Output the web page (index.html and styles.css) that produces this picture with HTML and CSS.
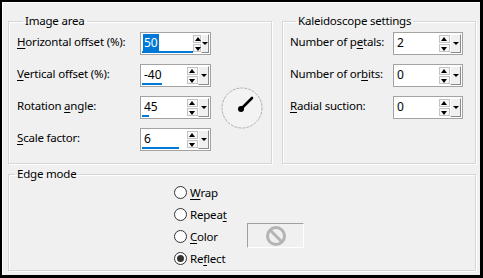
FILE: index.html
```html
<!DOCTYPE html>
<html>
<head>
    <meta charset="UTF-8">
    <title>Kaleidoscope</title>
    <link rel="stylesheet" href="styles.css">
</head>
<body>
    <div class="dialog">
        <div class="top_row">
            <fieldset class="group image_area">
                <legend>Image area</legend>
                <div class="grid_left">
                    <label class="lbl"><u>H</u>orizontal offset (%):</label>
                    <div class="spin">
                        <div class="field"><span class="val"><span class="sel">50</span></span><i class="bar" style="width:51px"></i></div>
                        <div class="arrows"><b class="up"></b><b class="down"></b></div>
                        <div class="drop"></div>
                    </div>

                    <label class="lbl"><u>V</u>ertical offset (%):</label>
                    <div class="spin">
                        <div class="field"><span class="val">-40</span><i class="bar" style="width:20px"></i></div>
                        <div class="arrows"><b class="up"></b><b class="down"></b></div>
                        <div class="drop"></div>
                    </div>

                    <label class="lbl">Rotation <u>a</u>ngle:</label>
                    <div class="spin">
                        <div class="field"><span class="val">45</span><i class="bar" style="width:7px"></i></div>
                        <div class="arrows"><b class="up"></b><b class="down"></b></div>
                        <div class="drop"></div>
                    </div>

                    <label class="lbl"><u>S</u>cale factor:</label>
                    <div class="spin">
                        <div class="field"><span class="val">6</span><i class="bar" style="width:37px"></i></div>
                        <div class="arrows"><b class="up"></b><b class="down"></b></div>
                        <div class="drop"></div>
                    </div>

                    <div class="dial">
                        <svg width="42" height="42" viewBox="0 0 42 42">
                            <circle cx="21" cy="21" r="20" fill="#f3f3f3" stroke="#b0b0b0" stroke-width="1" stroke-dasharray="3 1"/>
                            <line x1="20" y1="22" x2="31" y2="11" stroke="#000" stroke-width="2.6" stroke-linecap="round"/>
                            <circle cx="20" cy="22" r="3" fill="#000"/>
                        </svg>
                    </div>
                </div>
            </fieldset>

            <fieldset class="group kaleido">
                <legend>Kaleidoscope settings</legend>
                <div class="grid_right">
                    <label class="lbl">Number of p<u>e</u>tals:</label>
                    <div class="spin">
                        <div class="field"><span class="val">2</span></div>
                        <div class="arrows"><b class="up"></b><b class="down"></b></div>
                        <div class="drop"></div>
                    </div>

                    <label class="lbl">Number of or<u>b</u>its:</label>
                    <div class="spin">
                        <div class="field"><span class="val">0</span></div>
                        <div class="arrows"><b class="up"></b><b class="down"></b></div>
                        <div class="drop"></div>
                    </div>

                    <label class="lbl"><u>R</u>adial suction:</label>
                    <div class="spin">
                        <div class="field"><span class="val">0</span></div>
                        <div class="arrows"><b class="up"></b><b class="down"></b></div>
                        <div class="drop"></div>
                    </div>
                </div>
            </fieldset>
        </div>

        <fieldset class="group edge_mode">
            <legend>Edge mode</legend>
            <div class="edge_row">
                <div class="radios">
                    <div class="radio"><span class="dot"></span><span><u>W</u>rap</span></div>
                    <div class="radio"><span class="dot"></span><span>Repea<u>t</u></span></div>
                    <div class="radio"><span class="dot"></span><span><u>C</u>olor</span></div>
                    <div class="radio"><span class="dot checked"></span><span>Re<u>f</u>lect</span></div>
                </div>
                <div class="swatch">
                    <svg width="22" height="22" viewBox="0 0 22 22">
                        <circle cx="11" cy="11" r="8.5" fill="none" stroke="#b4b4b4" stroke-width="3"/>
                        <line x1="5" y1="5" x2="17" y2="17" stroke="#b4b4b4" stroke-width="3"/>
                    </svg>
                </div>
            </div>
        </fieldset>
    </div>
</body>
</html>
```

FILE: styles.css
```css
body {
    margin: 0;
    padding: 0;
    font-family: "Noto Sans", Arial, sans-serif;
    font-size: 11.5px;
    letter-spacing: -0.2px;
    color: #000;
    background-color: #f0f0f0;
}

u {
    text-decoration-thickness: 1px;
    text-underline-offset: 2px;
}

.dialog {
    width: 483px;
    height: 278px;
    box-sizing: border-box;
    border-style: solid;
    border-color: #000;
    border-width: 2px 3px 3px 2px;
    background-color: #f0f0f0;
    box-shadow: inset 1px 1px 0 #fff;
    padding: 12px 4px 0 6px;
}

.top_row {
    display: flex;
    gap: 10px;
}

.group {
    margin: 0;
    box-sizing: border-box;
    border: 1px solid #d6d6d6;
    box-shadow: inset 1px 1px 0 #fff, 1px 1px 0 #fff;
    min-width: 0;
}

.group legend {
    margin-left: 6px;
    padding: 0 2px;
    line-height: 14px;
}

.image_area {
    width: 264px;
    height: 150px;
    padding: 4px 0 0 8px;
}

.kaleido {
    width: 194px;
    height: 150px;
    padding: 4px 0 0 7px;
}

.grid_left {
    display: grid;
    grid-template-columns: 123px 71px 52px;
    grid-auto-rows: 23px;
    row-gap: 9px;
}

.grid_left .lbl {
    grid-column: 1;
}

.grid_left .spin {
    grid-column: 2;
}

.grid_right {
    display: grid;
    grid-template-columns: 103px 70px;
    grid-auto-rows: 23px;
    row-gap: 9px;
}

.lbl {
    align-self: start;
    line-height: 16px;
    padding-top: 2px;
    white-space: nowrap;
}

.dial {
    grid-column: 3;
    grid-row: 2 / span 3;
    align-self: center;
    height: 42px;
    margin-left: 10px;
}

.dial svg {
    display: block;
}

.spin {
    display: flex;
    box-sizing: border-box;
    height: 23px;
    border: 1px solid #a3a3a3;
    background-color: #fff;
    padding-right: 1px;
}

.field {
    flex: 1;
    display: flex;
    flex-direction: column;
    padding-left: 1px;
}

.val {
    line-height: 17px;
    padding-left: 2px;
    padding-top: 1px;
    font-size: 12px;
    letter-spacing: 0;
}

.sel {
    background-color: #0078d7;
    color: #fff;
    padding: 0 1px;
    margin-left: -1px;
}

.bar {
    display: block;
    height: 3px;
    margin-top: auto;
    margin-bottom: 1px;
    background-color: #0078d7;
}

.arrows {
    width: 11px;
    display: flex;
    flex-direction: column;
    gap: 1px;
    padding: 2px 0;
    box-sizing: border-box;
}

.arrows b {
    flex: 1;
    position: relative;
    box-sizing: border-box;
    border: 1px solid #c4c4c4;
    background-color: #f7f7f7;
}

.arrows b::after {
    content: "";
    position: absolute;
    left: 1px;
    width: 0;
    height: 0;
    border-left: 3.5px solid transparent;
    border-right: 3.5px solid transparent;
}

.arrows .up::after {
    top: 1px;
    border-bottom: 4px solid #000;
}

.arrows .down::after {
    top: 2px;
    border-top: 4px solid #000;
}

.drop {
    width: 11px;
    margin: 1px 0;
    box-sizing: border-box;
    background-color: #f0f0f0;
    border-top: 1px solid #fff;
    border-left: 1px solid #fff;
    border-right: 1px solid #8a8a8a;
    border-bottom: 1px solid #8a8a8a;
    display: flex;
    align-items: center;
    justify-content: center;
}

.drop::after {
    content: "";
    width: 0;
    height: 0;
    border-left: 3px solid transparent;
    border-right: 3px solid transparent;
    border-top: 3px solid #000;
}

.edge_mode {
    width: 468px;
    height: 104px;
    margin-top: 3px;
    padding: 0;
}

.edge_row {
    display: flex;
    padding-left: 165px;
}

.radios {
    width: 63px;
    display: flex;
    flex-direction: column;
}

.radio {
    display: flex;
    align-items: center;
    gap: 3px;
    height: 22px;
    white-space: nowrap;
}

.dot {
    width: 13px;
    height: 13px;
    box-sizing: border-box;
    border: 1px solid #333;
    border-radius: 50%;
    background-color: #fff;
    display: flex;
    align-items: center;
    justify-content: center;
}

.dot.checked::after {
    content: "";
    width: 7px;
    height: 7px;
    border-radius: 50%;
    background-color: #333;
}

.swatch {
    width: 57px;
    height: 25px;
    margin-left: 10px;
    margin-top: 42px;
    box-sizing: border-box;
    border-top: 1px solid #a0a0a0;
    border-left: 1px solid #a0a0a0;
    border-right: 1px solid #fff;
    border-bottom: 1px solid #fff;
    display: flex;
    align-items: center;
    justify-content: center;
}
```
